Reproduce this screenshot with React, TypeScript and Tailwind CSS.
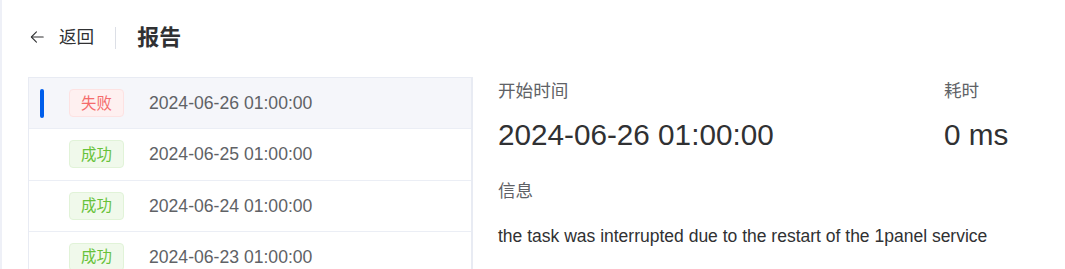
const records = [
  { status: "failed", time: "2024-06-26 01:00:00" },
  { status: "success", time: "2024-06-25 01:00:00" },
  { status: "success", time: "2024-06-24 01:00:00" },
  { status: "success", time: "2024-06-23 01:00:00" },
  { status: "success", time: "2024-06-22 01:00:00" },
];

function BackIcon() {
  return (
    <svg viewBox="0 0 1024 1024" className="w-[18px] h-[18px]" fill="currentColor">
      <path d="M224 480h640a32 32 0 1 1 0 64H224a32 32 0 0 1 0-64z" />
      <path d="m237.248 512 265.408 265.344a32 32 0 0 1-45.312 45.312l-288-288a32 32 0 0 1 0-45.312l288-288a32 32 0 1 1 45.312 45.312L237.248 512z" />
    </svg>
  );
}

export default function App() {
  return (
    <div
      className="h-[269px] w-[1065px] overflow-hidden bg-white flex"
      style={{ fontFamily: '"Liberation Sans", "Noto Sans CJK SC", sans-serif' }}
    >
      <div className="w-[2px] shrink-0 bg-[#eef0f7]" />
      <div className="flex-1 pl-[26px]">
        <div className="flex items-center h-[77px] pb-[2px]">
          <div className="flex items-center text-[#303133]">
            <BackIcon />
            <span className="ml-[13px] text-[17.6px]">返回</span>
          </div>
          <div className="mx-[21px] w-px h-[22px] bg-[#dcdfe6]" />
          <h1 className="text-[22px] font-bold text-[#303133]">报告</h1>
        </div>

        <div className="flex">
          <div className="w-[445px] shrink-0 border-l border-t border-r-2 border-[#e8ebf3]">
            {records.map((r, i) => (
              <div
                key={r.time}
                className={`flex items-center h-[51.3px] border-b border-[#ebeef5] ${i === 0 ? "bg-[#f5f6fa]" : ""}`}
              >
                <div className="w-[11px]" />
                <div className={`w-[3.5px] h-[29px] rounded-full ${i === 0 ? "bg-[#005eeb]" : ""}`} />
                <div className="w-[25.5px]" />
                <span
                  className={`w-[55px] h-[28px] flex items-center justify-center rounded-[4px] border text-[15.4px] ${
                    r.status === "failed"
                      ? "bg-[#fef0f0] border-[#fde2e2] text-[#f56c6c]"
                      : "bg-[#f0f9eb] border-[#e1f3d8] text-[#67c23a]"
                  }`}
                >
                  {r.status === "failed" ? "失败" : "成功"}
                </span>
                <span className="ml-[25px] text-[17.6px] text-[#606266]">{r.time}</span>
              </div>
            ))}
          </div>

          <div className="flex-1 pl-[25px] pt-[1px]">
            <div className="flex">
              <div className="w-[446px]">
                <div className="text-[17.6px] leading-[26px] text-[#606266]">开始时间</div>
                <div className="mt-[11px] text-[29.7px] leading-[40px] text-[#303133]">2024-06-26 01:00:00</div>
              </div>
              <div>
                <div className="text-[17.6px] leading-[26px] text-[#606266]">耗时</div>
                <div className="mt-[11px] text-[29.7px] leading-[40px] text-[#303133]">0 ms</div>
              </div>
            </div>
            <div className="mt-[23px] text-[17.6px] leading-[26px] text-[#606266]">信息</div>
            <div className="mt-[19px] text-[17.5px] leading-[26px] text-[#303133]">
              the task was interrupted due to the restart of the 1panel service
            </div>
          </div>
        </div>
      </div>
    </div>
  );
}
